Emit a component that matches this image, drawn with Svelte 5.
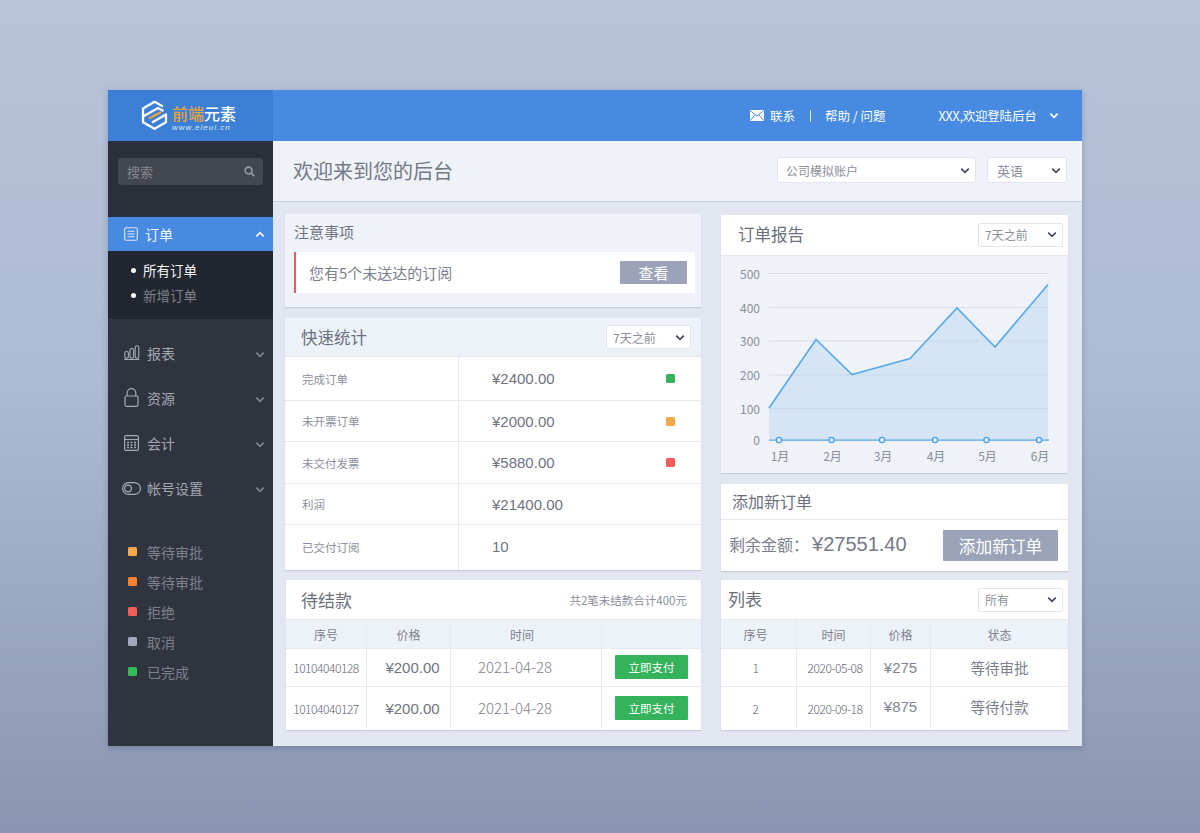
<script>
  const nav = [
    { label: '报表', icon: 'bars' },
    { label: '资源', icon: 'lock' },
    { label: '会计', icon: 'calc' },
    { label: '帐号设置', icon: 'toggle' }
  ];
  const legend = [
    ['等待审批', '#f7a94b'],
    ['等待审批', '#f5802e'],
    ['拒绝', '#f45b5b'],
    ['取消', '#a3a9bd'],
    ['已完成', '#36b957']
  ];
  const stats = [
    ['完成订单', '¥2400.00', '#36b35a', 44],
    ['未开票订单', '¥2000.00', '#f5a64a', 41],
    ['未交付发票', '¥5880.00', '#f45b5b', 42],
    ['利润', '¥21400.00', '', 41],
    ['已交付订阅', '10', '', 45]
  ];
  const pending = [
    ['10104040128', '¥200.00', '2021-04-28'],
    ['10104040127', '¥200.00', '2021-04-28']
  ];
  const list = [
    ['1', '2020-05-08', '¥275', '等待审批'],
    ['2', '2020-09-18', '¥875', '等待付款']
  ];
  const ox = 721, oy = 256;
  const gridY = [[500, 273.5], [400, 307.5], [300, 341], [200, 375], [100, 408.5], [0, 440]];
  const pts = [[769, 408], [816, 339.5], [852, 374.5], [910, 358.5], [957, 308], [995, 347], [1048, 284.5]];
  const line = pts.map((p) => `${p[0] - ox},${p[1] - oy}`).join(' ');
  const area = `${769 - ox},${440 - oy} ${line} ${1048 - ox},${440 - oy}`;
  const months = [[779, '1月'], [831.5, '2月'], [882, '3月'], [935, '4月'], [986.5, '5月'], [1039, '6月']];
</script>

{#snippet chev(up)}
  <svg class="chev" width="10" height="7" viewBox="0 0 10 7">
    <path d={up ? 'M1.3 5.4 5 1.7 8.7 5.4' : 'M1.3 1.6 5 5.3 8.7 1.6'} fill="none" stroke="currentColor" stroke-width="1.8" />
  </svg>
{/snippet}

<div class="page">
  <div class="app">
    <aside class="side">
      <div class="logo">
        <svg width="27" height="31" viewBox="0 0 27 31">
          <path d="M22 6.5 13.5 1.8 2 8.4V22.2L13.5 28.8 25 22.2V14.5L11 22.5" fill="none" stroke="#fff" stroke-width="2.3" stroke-linejoin="round" />
          <path d="M2 16.5 17 8 22.5 11" fill="none" stroke="#fff" stroke-width="2.3" />
          <path d="M8 18.5 20 12" fill="none" stroke="#e9a33c" stroke-width="2.3" />
        </svg>
        <div class="brand">
          <div class="brand-name"><span class="o">前端</span>元素</div>
          <div class="brand-url">www.eleui.cn</div>
        </div>
      </div>
      <div class="search-wrap">
        <div class="search">
          <span>搜索</span>
          <svg width="11" height="11" viewBox="0 0 11 11"><circle cx="4.6" cy="4.6" r="3.4" fill="none" stroke="#9599a3" stroke-width="1.7" /><path d="M7.2 7.2 10.2 10.2" stroke="#9599a3" stroke-width="1.8" /></svg>
        </div>
      </div>
      <div class="active-item">
        <svg width="14" height="14" viewBox="0 0 14 14"><rect x=".7" y=".7" width="12.6" height="12.6" rx="1.6" fill="none" stroke="#dfe9f8" stroke-width="1.1" /><path d="M3.5 4.2h7M3.5 7h7M3.5 9.8h7" stroke="#dfe9f8" stroke-width="1.1" /></svg>
        <span class="active-label">订单</span>
        {@render chev(true)}
      </div>
      <ul class="sub">
        <li class="on">所有订单</li>
        <li>新增订单</li>
      </ul>
      <div class="nav">
        {#each nav as n}
          <div class="nav-item">
            <span class="nav-icon">
              {#if n.icon === 'bars'}
                <svg width="16" height="15" viewBox="0 0 16 15"><g fill="none" stroke="#a6aab4" stroke-width="1.1"><rect x=".8" y="6.5" width="3.6" height="6.8" rx="1.7" /><rect x="6" y="3.5" width="3.6" height="9.8" rx="1.7" /><rect x="11.2" y=".8" width="3.6" height="12.5" rx="1.7" /></g><path d="M0 14.5h15.5" stroke="#a6aab4" stroke-width="1.1" /></svg>
              {:else if n.icon === 'lock'}
                <svg width="15" height="19" viewBox="0 0 15 19"><g fill="none" stroke="#a6aab4" stroke-width="1.2"><rect x="1" y="8" width="13" height="10.3" rx="1.5" /><path d="M3.2 8V5a4.3 4.3 0 0 1 8.6 0v3" /></g></svg>
              {:else if n.icon === 'calc'}
                <svg width="15" height="16" viewBox="0 0 15 16"><rect x=".6" y=".6" width="13.8" height="14.8" rx="1.5" fill="none" stroke="#a6aab4" stroke-width="1.2" /><path d="M1 4.5h13" stroke="#a6aab4" stroke-width="1.1" /><path d="M3 7.5h2M6.5 7.5h2M10 7.5h2M3 10h2M6.5 10h2M10 10h2M3 12.5h2M6.5 12.5h2M10 12.5h2" stroke="#a6aab4" stroke-width="1.5" /></svg>
              {:else}
                <svg class="tog" width="19" height="13" viewBox="0 0 19 13"><rect x=".6" y=".6" width="17.8" height="11.8" rx="5.9" fill="none" stroke="#a6aab4" stroke-width="1.2" /><circle cx="6" cy="6.5" r="3.4" fill="none" stroke="#a6aab4" stroke-width="1.2" /></svg>
              {/if}
            </span>
            <span class="nav-label">{n.label}</span>
            {@render chev(false)}
          </div>
        {/each}
      </div>
      <div class="legend">
        {#each legend as l}
          <div class="legend-item"><i style="background:{l[1]}"></i>{l[0]}</div>
        {/each}
      </div>
    </aside>

    <div class="right">
      <header class="top">
        <svg width="14" height="11" viewBox="0 0 14 11"><rect width="14" height="11" rx="1" fill="#fff" /><path d="M.5.8 7 6l6.5-5.2M.5 10.2 5 5M13.5 10.2 9 5" fill="none" stroke="#468ae2" stroke-width="1" /></svg>
        <span class="t-contact">联系</span>
        <span class="t-sep"></span>
        <span class="t-help">帮助 / 问题</span>
        <span class="t-user">XXX,欢迎登陆后台</span>
        {@render chev(false)}
      </header>
      <div class="head">
        <h1>欢迎来到您的后台</h1>
        <select class="sel account"><option>公司模拟账户</option></select>
        <select class="sel lang"><option>英语</option></select>
      </div>
      <div class="content">
        <div class="col left">
          <section class="card notice">
            <h3>注意事项</h3>
            <div class="alert">
              <span>您有5个未送达的订阅</span>
              <button>查看</button>
            </div>
          </section>

          <section class="card stats">
            <div class="card-head tinted">
              <h2>快速统计</h2>
              <select class="sel small"><option>7天之前</option></select>
            </div>
            {#each stats as s}
              <div class="stat-row" style="height:{s[3]}px">
                <div class="stat-label">{s[0]}</div>
                <div class="stat-val">
                  <span>{s[1]}</span>
                  {#if s[2]}<i style="background:{s[2]}"></i>{/if}
                </div>
              </div>
            {/each}
          </section>

          <section class="card pending">
            <div class="card-head">
              <h2>待结款</h2>
              <span class="note">共2笔未结款合计400元</span>
            </div>
            <div class="tr th p-grid"><div>序号</div><div>价格</div><div class="th-time">时间</div><div></div></div>
            {#each pending as r, i}
              <div class="tr p-grid" class:last={i === 1}>
                <div class="id">{r[0]}</div>
                <div class="price">{r[1]}</div>
                <div class="date">{r[2]}</div>
                <div><button class="pay">立即支付</button></div>
              </div>
            {/each}
          </section>
        </div>

        <div class="col rightcol">
          <section class="card report">
            <div class="card-head report-head">
              <h2>订单报告</h2>
              <select class="sel small"><option>7天之前</option></select>
            </div>
            <svg class="chart" width="347" height="217" viewBox="0 0 347 217">
              {#each gridY as g}
                <line x1="48" x2="328" y1={g[1] - oy} y2={g[1] - oy} stroke={g[0] === 0 ? '#5aa9e6' : '#d5dcea'} stroke-width={g[0] === 0 ? 1.3 : 1} />
                <text x="39" y={g[1] - oy + 5} text-anchor="end" class="axis">{g[0]}</text>
              {/each}
              <polygon points={area} fill="#b5d5f5" opacity=".45" />
              <polyline points={line} fill="none" stroke="#5aaaea" stroke-width="1.7" stroke-linejoin="miter" />
              {#each months as m}
                <circle cx={m[0] - ox} cy={440 - oy} r="2.6" fill="#eff2f8" stroke="#45a3ea" stroke-width="1.4" />
                <text x={m[0] - ox + 1} y="205" text-anchor="middle" class="axis">{m[1]}</text>
              {/each}
            </svg>
          </section>

          <section class="card addnew">
            <h3>添加新订单</h3>
            <div class="add-body">
              <span class="bal">剩余金额：</span><span class="amt">¥27551.40</span>
              <button>添加新订单</button>
            </div>
          </section>

          <section class="card listcard">
            <div class="card-head list-head">
              <h2>列表</h2>
              <select class="sel small"><option>所有</option></select>
            </div>
            <div class="tr th l-grid"><div class="l-first">序号</div><div>时间</div><div>价格</div><div>状态</div></div>
            {#each list as r, i}
              <div class="tr l-grid" class:last={i === 1}>
                <div class="id l-first">{r[0]}</div>
                <div class="id l-date">{r[1]}</div>
                <div class="lprice">{r[2]}</div>
                <div class="status">{r[3]}</div>
              </div>
            {/each}
          </section>
        </div>
      </div>
    </div>
  </div>
</div>

<style>
  :global(body) {
    margin: 0;
    font-family: "Noto Sans CJK SC", "Noto Sans", sans-serif;
  }
  .page {
    box-sizing: border-box;
    width: 1200px;
    height: 833px;
    padding: 90px 0 0 108px;
    background: linear-gradient(180deg, #b6c3da 0%, #aebbd4 45%, #8a96b1 100%);
    overflow: hidden;
  }
  .app {
    display: flex;
    width: 974px;
    height: 656px;
    box-shadow: 0 2px 6px rgba(70, 80, 110, .35);
    background: #e1e6f0;
    color: #6f7584;
  }
  h1, h2, h3 { margin: 0; font-weight: 400; }
  button { border: 0; font-family: inherit; color: #fff; padding: 0; }
  .side {
    width: 165px;
    flex: none;
    background: #30343f;
    display: flex;
    flex-direction: column;
  }
  .logo {
    height: 51px;
    background: #3b7fd6;
    display: flex;
    align-items: center;
    padding-left: 33px;
    gap: 4px;
  }
  .brand { color: #fff; line-height: 1; margin-top: 4px; }
  .brand-name { font-size: 16px; font-weight: 500; line-height: 20px; width: 64px; white-space: nowrap; }
  .o { color: #e9a33c; }
  .brand-url { font-size: 8px; line-height: 10px; font-style: italic; letter-spacing: 1px; font-family: "Liberation Sans", sans-serif; color: #dfe9f8; white-space: nowrap; }
  .search-wrap {
    height: 76px;
    padding: 17px 10px 0;
    box-sizing: border-box;
    background: #2b2f3a;
  }
  .search {
    height: 27px;
    background: #43474f;
    border-radius: 3px;
    display: flex;
    align-items: center;
    justify-content: space-between;
    padding: 0 8px 1px 9px;
    box-sizing: border-box;
    font-size: 13px;
    color: #83878f;
  }
  .active-item {
    height: 34px;
    background: #468ae2;
    display: flex;
    align-items: center;
    padding: 0 8px 0 16px;
    color: #f2f6fd;
  }
  .active-label { font-size: 14px; margin-left: 7px; flex: 1; }
  .chev { display: block; flex: none; }
  .sub {
    list-style: none;
    margin: 0;
    padding: 7px 0 0 35px;
    height: 68px;
    box-sizing: border-box;
    background: #22262f;
  }
  .sub li {
    font-size: 13.5px;
    line-height: 25px;
    color: #7d818b;
    position: relative;
  }
  .sub li::before {
    content: "";
    position: absolute;
    left: -12px;
    top: 10px;
    width: 5px;
    height: 5px;
    border-radius: 50%;
    background: #fff;
  }
  .sub li.on { color: #f4f5f7; }
  .nav { padding-top: 11px; color: #7f838d; }
  .nav-item {
    height: 45.2px;
    display: flex;
    align-items: center;
    padding: 0 8px 0 16px;
  }
  .nav-item .chev { margin-top: 3px; }
  .nav-icon { width: 23px; display: flex; align-items: center; }
  .tog { margin-left: -2px; }
  .nav-label { font-size: 14px; color: #a3a7b0; flex: 1; }
  .legend { margin-top: 26px; padding-left: 20px; }
  .legend-item {
    height: 30px;
    display: flex;
    align-items: center;
    font-size: 14px;
    color: #7d818c;
  }
  .legend-item i {
    width: 9px;
    height: 9px;
    border-radius: 1.5px;
    margin-right: 10px;
  }
  .right { flex: 1; display: flex; flex-direction: column; min-width: 0; }
  .top {
    height: 51px;
    background: #468ae2;
    display: flex;
    align-items: center;
    padding-left: 477px;
    color: #fff;
    font-size: 12.5px;
  }
  .t-contact { margin-left: 6px; }
  .t-sep { width: 1px; height: 12px; background: #dfeafa; margin: 0 14px 0 15px; }
  .t-help { white-space: nowrap; }
  .t-user { margin-left: 53px; margin-right: 12px; white-space: nowrap; letter-spacing: -.2px; }
  .head {
    height: 61px;
    box-sizing: border-box;
    background: #eff2f8;
    border-bottom: 1px solid #c9ced9;
    display: flex;
    align-items: center;
    padding: 0 15px 2px 20px;
  }
  .head h1 { font-size: 20px; flex: 1; color: #737986; }
  .sel {
    appearance: none;
    font-family: inherit;
    background: #fff url("data:image/svg+xml,%3Csvg xmlns='http://www.w3.org/2000/svg' width='10' height='7'%3E%3Cpath d='M1.2 1.6 5 5.4 8.8 1.6' fill='none' stroke='%23444a58' stroke-width='1.7'/%3E%3C/svg%3E") no-repeat right 5px center;
    border: 1px solid #e1e5ee;
    border-radius: 2px;
    color: #8b8f9a;
    box-sizing: border-box;
  }
  .account { width: 199px; height: 26px; font-size: 12px; padding-left: 8px; }
  .lang { width: 80px; height: 26px; font-size: 13px; margin-left: 11px; padding-left: 9px; }
  .small { width: 85px; height: 24px; font-size: 12px; padding-left: 6px; }
  .content {
    flex: 1;
    display: flex;
    padding: 12px 14px 0 12px;
    gap: 20px;
  }
  .col { display: flex; flex-direction: column; }
  .left { width: 416px; }
  .rightcol { width: 347px; margin-top: 1px; }
  .card { background: #fff; box-shadow: 0 1px 1px rgba(120, 130, 155, .25); }
  .card-head {
    height: 39px;
    box-sizing: border-box;
    display: flex;
    align-items: center;
    justify-content: space-between;
    padding: 0 10px 0 16px;
  }
  .tinted { background: #edf1f8; border-bottom: 1px solid #e3e7f0; }
  .card-head h2 { font-size: 16.5px; color: #6a707e; margin-bottom: 1px; }
  .notice { background: #eff2f8; height: 93px; padding: 0 6px 0 9px; box-sizing: border-box; }
  .notice h3 { font-size: 15px; line-height: 36px; height: 38px; color: #6f7584; }
  .alert {
    height: 41px;
    background: #fff;
    border-left: 2px solid #f0595c;
    display: flex;
    align-items: center;
    justify-content: space-between;
    padding: 0 8px 0 13px;
    font-size: 15px;
    color: #7b808d;
  }
  .alert button {
    width: 67px;
    height: 23px;
    background: #9ba3b8;
    border-radius: 1px;
    font-size: 15px;
    line-height: 23px;
  }
  .stats { margin-top: 11px; height: 252px; }
  .stat-row {
    display: flex;
    box-sizing: border-box;
    border-bottom: 1px solid #e6e9f2;
  }
  .stat-row:last-child { border-bottom: 0; }
  .stat-label {
    width: 174px;
    box-sizing: border-box;
    border-right: 1px solid #e6e9f2;
    padding: 0 0 0 17px;
    font-size: 11.5px;
    color: #8b8f9b;
    display: flex;
    align-items: center;
  }
  .stat-row:last-child .stat-label,
  .stat-row:last-child .stat-val span { padding-bottom: 2px; }
  .stat-val {
    flex: 1;
    display: flex;
    align-items: center;
    justify-content: space-between;
    padding: 0 26px 0 33px;
    font: 15px "Liberation Sans", sans-serif;
    color: #6f7382;
  }
  .stat-val i { width: 9px; height: 9px; border-radius: 1.5px; }
  .pending { margin-top: 10px; height: 150px; margin-left: 1px; }
  .pending .card-head { padding: 0 14px 0 15px; }
  .pending h2 { font-size: 17px; }
  .note { font-size: 11.5px; color: #8b8f9b; }
  .tr { display: grid; border-top: 1px solid #e6e9f2; height: 38px; box-sizing: border-box; }
  .tr > div { display: flex; align-items: center; justify-content: center; border-right: 1px solid #e6e9f2; min-width: 0; }
  .tr > div:last-child { border-right: 0; }
  .tr.last { height: 43px; }
  .th { background: #edf1f8; height: 29px; font-size: 12px; color: #7d818e; }
  .tr > .th-time { padding-right: 8px; }
  .p-grid { grid-template-columns: 81px 84px 151px 99px; }
  .l-grid { grid-template-columns: 76px 74px 60px 137px; }
  .id { font-size: 12px; font-weight: 300; letter-spacing: -.45px; color: #5f6372; white-space: nowrap; }
  .tr > .l-first { padding-right: 6px; }
  .tr > .l-date { padding-left: 3px; }
  .price { font: 15px "Liberation Sans", sans-serif; color: #6f7382; }
  .tr > .price { padding-left: 8px; }
  .tr > .date { font-size: 15px; font-weight: 300; color: #7f8390; padding: 0 22px 2px 0; }
  .pay { width: 73px; height: 24px; background: #34b35a; font-size: 11.5px; border-radius: 1px; }
  .tr:not(.last) .pay { margin-bottom: 2px; }
  .report { height: 258px; background: #eff2f8; }
  .report-head { background: #fff; border-bottom: 1px solid #e3e7f0; height: 41px; padding: 0 5px 1px 17px; }
  .chart { display: block; }
  .axis { font-size: 12px; fill: #8a8e9a; }
  .addnew { margin-top: 11px; height: 87px; }
  .addnew h3 { font-size: 16px; line-height: 34px; height: 36px; box-sizing: border-box; padding-left: 11px; border-bottom: 1px solid #e6e9f2; color: #6a707e; }
  .add-body {
    display: flex;
    align-items: center;
    height: 51px;
    padding: 0 10px 0 8px;
    box-sizing: border-box;
  }
  .bal { font-size: 16px; color: #7b808d; margin-bottom: 4px; }
  .amt { font: 20px "Liberation Sans", sans-serif; color: #767a88; flex: 1; margin: 0 0 3px 3px; }
  .add-body button { width: 115px; height: 31px; background: #9ba3b8; font-size: 16.7px; border-radius: 1px; }
  .listcard { margin-top: 9px; height: 150px; }
  .list-head { padding: 0 5px 0 7px; }
  .list-head h2 { font-size: 17px; margin-bottom: 2px; }
  .lprice { font: 15px "Liberation Sans", sans-serif; color: #7f8390; }
  .tr > .lprice, .tr > .status { padding-bottom: 1px; }
  .tr.last > .lprice, .tr.last > .status { padding-bottom: 4px; }
  .status { font-size: 14.5px; color: #7b808d; }
</style>
